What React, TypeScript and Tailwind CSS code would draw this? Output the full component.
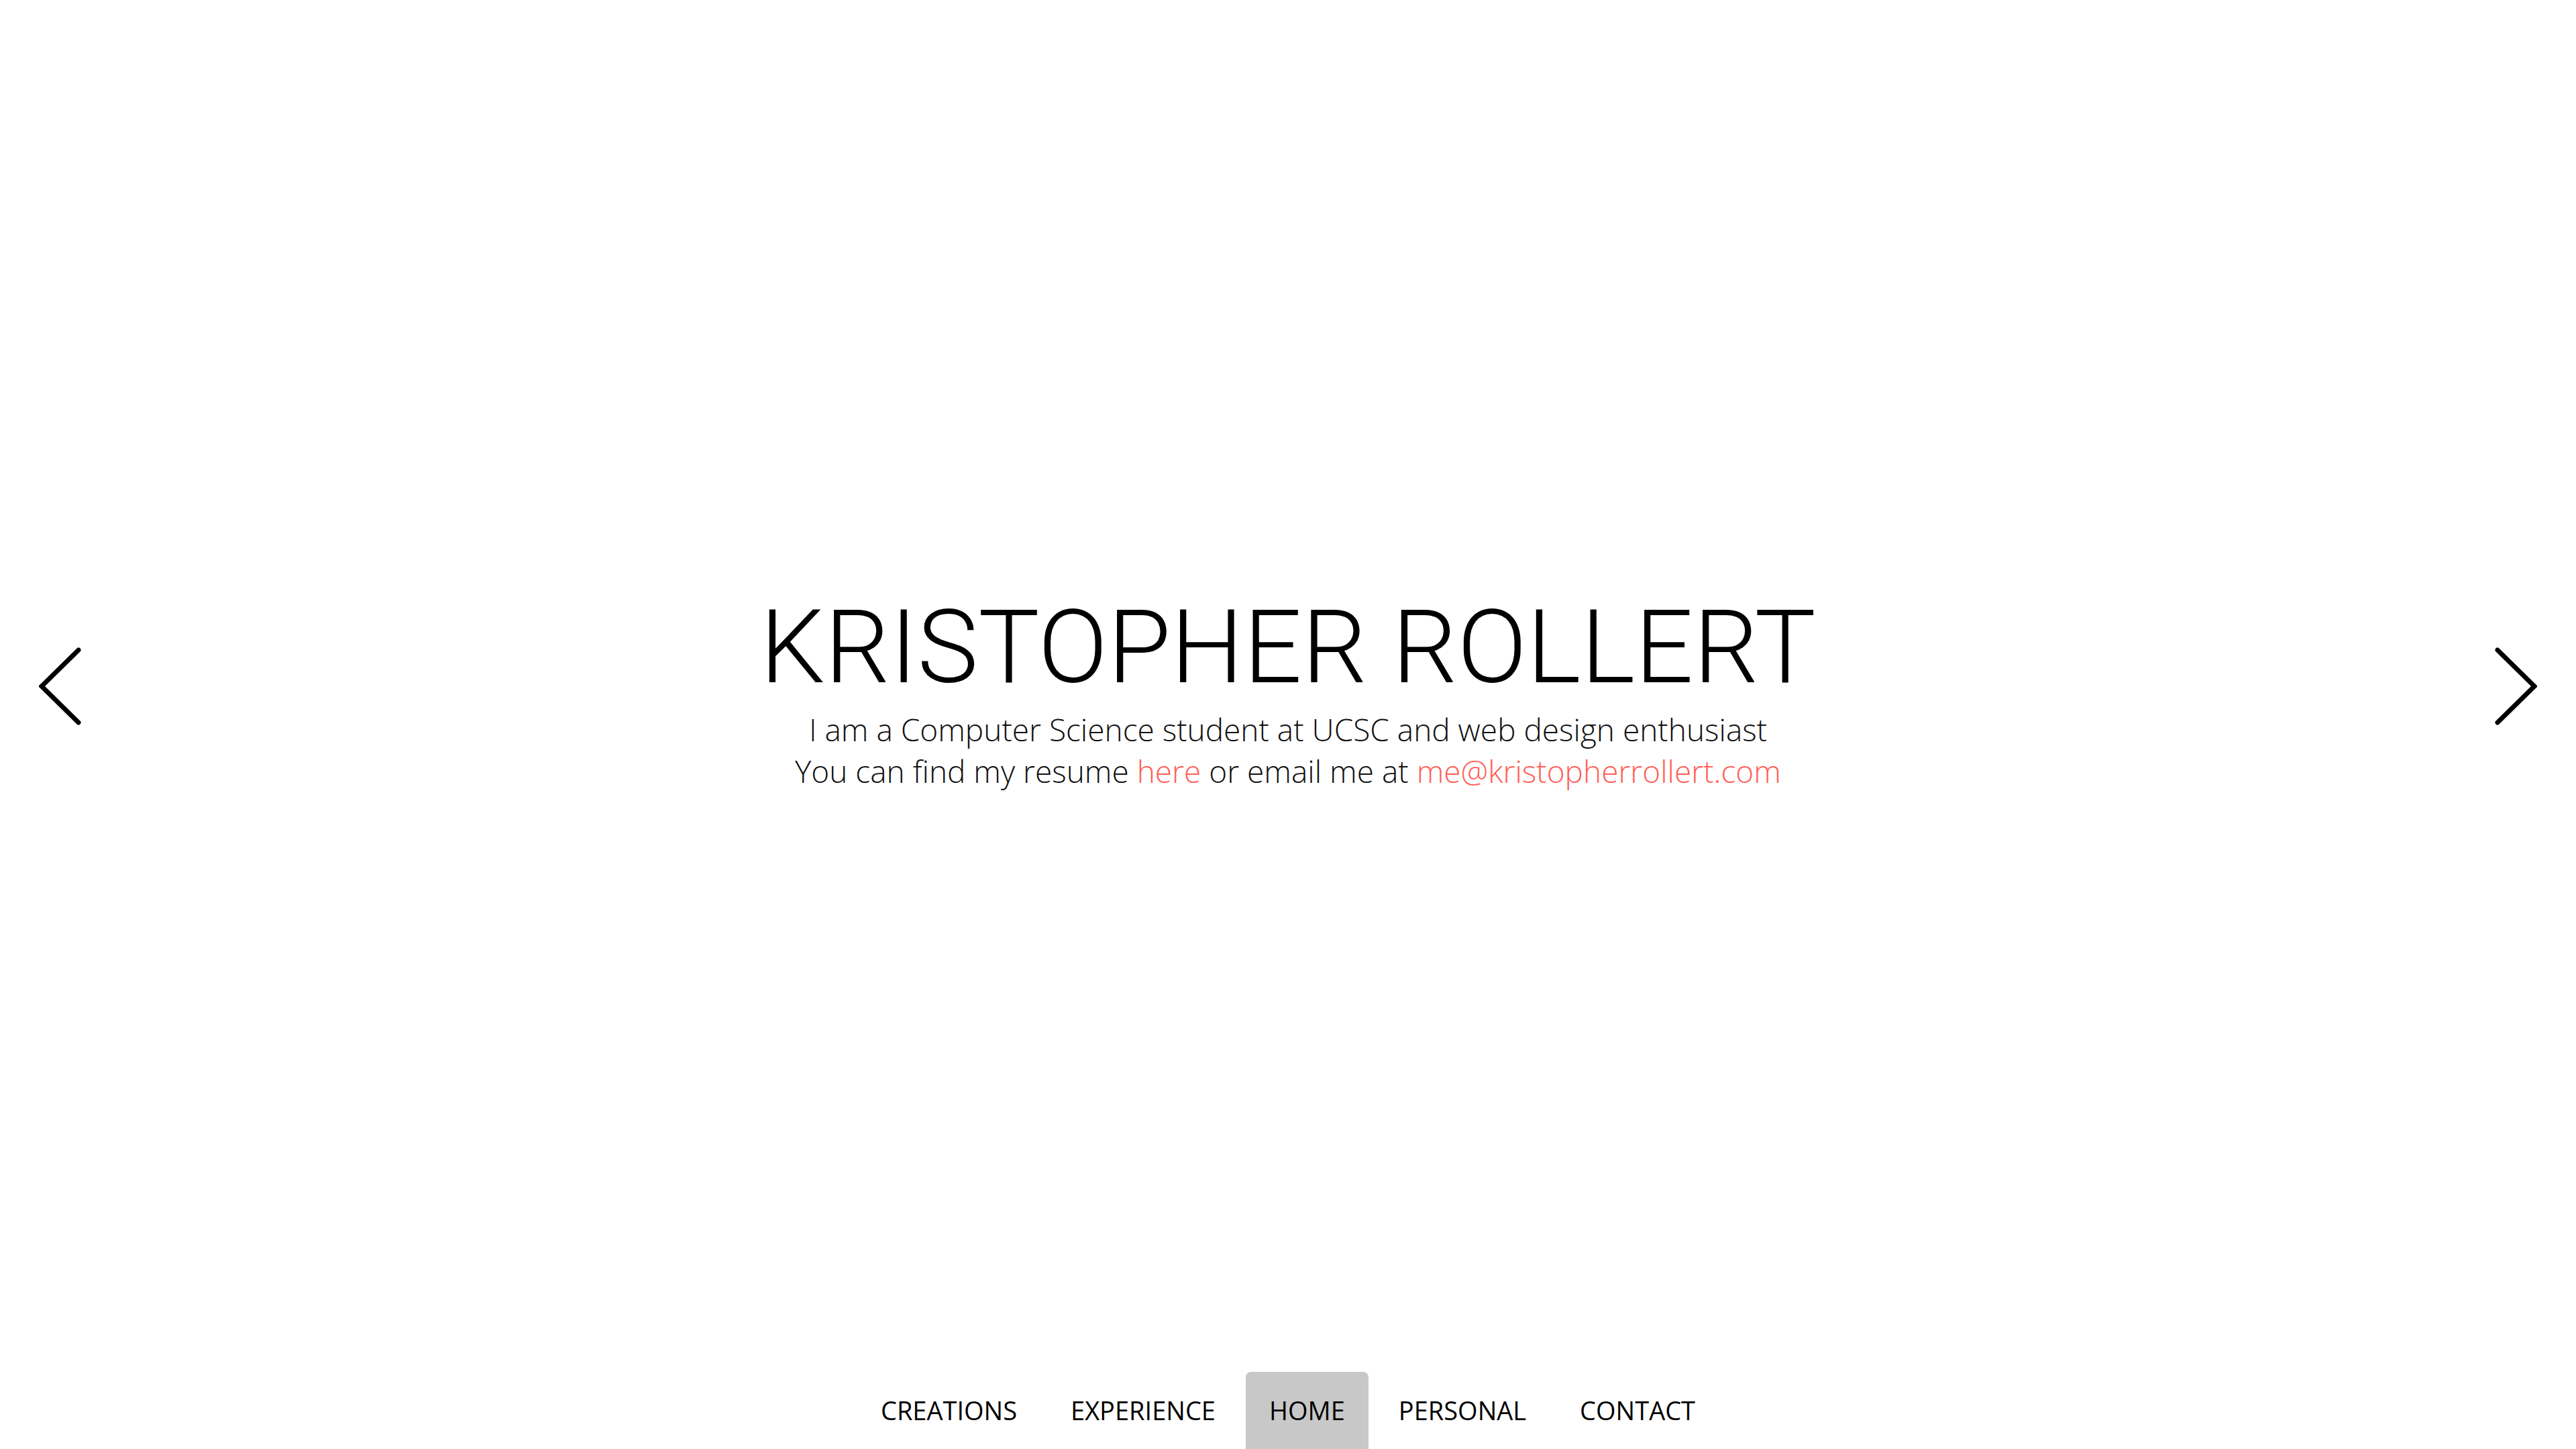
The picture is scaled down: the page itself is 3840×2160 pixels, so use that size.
import React from "react";

function Arrow({ dir }: { dir: "left" | "right" }) {
  return (
    <svg width="64" height="116" viewBox="0 0 64 116" className="shrink-0">
      <polyline
        points={dir === "left" ? "59,4 4,58 59,112" : "5,4 60,58 5,112"}
        fill="none"
        stroke="#000"
        strokeWidth="7"
        strokeLinecap="round"
        strokeLinejoin="miter"
      />
    </svg>
  );
}

export default function App() {
  const items = ["CREATIONS", "EXPERIENCE", "HOME", "PERSONAL", "CONTACT"];
  return (
    <div className="w-full h-[2160px] bg-white flex flex-col overflow-hidden">
      <div className="flex-1 flex items-center justify-between px-[58px]">
        <Arrow dir="left" />
        <div className="flex flex-col items-center pt-[14px]">
          <h1
            className="text-[153px] leading-[170px] font-light text-black"
            style={{ fontFamily: "Roboto, sans-serif" }}
          >
            KRISTOPHER ROLLERT
          </h1>
          <p
            className="mt-[6px] text-[46px] leading-[62px] font-light text-[#111] text-center"
            style={{ fontFamily: "'Open Sans', sans-serif" }}
          >
            I am a Computer Science student at UCSC and web design enthusiast
            <br />
            You can find my resume <a className="text-[#ff6057]">here</a> or email me at{" "}
            <a className="text-[#ff6057]">me@kristopherrollert.com</a>
          </p>
        </div>
        <Arrow dir="right" />
      </div>
      <nav className="flex justify-center gap-[10px] h-[115px]">
        {items.map((it) => (
          <div
            key={it}
            className={
              "h-full px-[35px] flex items-center text-[38px] text-black rounded-t-[8px] " +
              (it === "HOME" ? "bg-[#c8c8c8]" : "")
            }
            style={{ fontFamily: "'Open Sans', sans-serif" }}
          >
            {it}
          </div>
        ))}
      </nav>
    </div>
  );
}
